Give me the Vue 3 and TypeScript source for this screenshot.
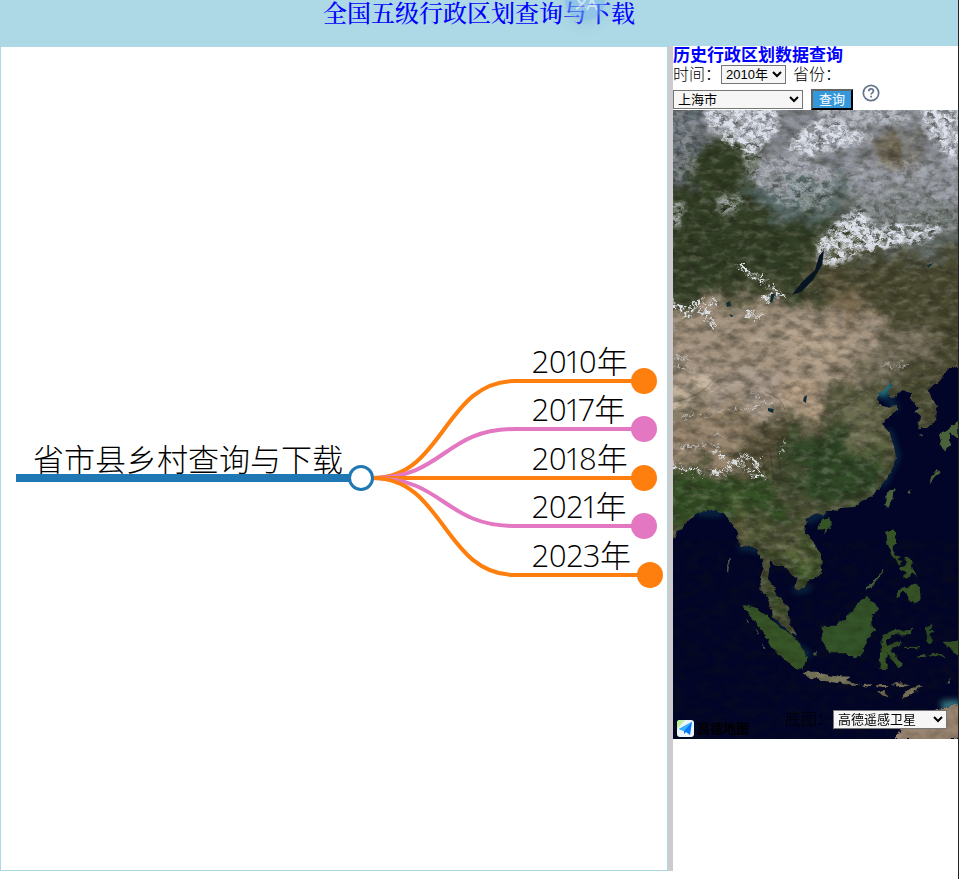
<script setup lang="ts">
import { ref } from 'vue'

interface Branch {
  year: string
  y: number
  end: number
  color: string
}

const branches: Branch[] = [
  { year: '2010年', y: 381, end: 644, color: '#ff7f0e' },
  { year: '2017年', y: 429, end: 644, color: '#e377c2' },
  { year: '2018年', y: 478, end: 644, color: '#ff7f0e' },
  { year: '2021年', y: 526, end: 644, color: '#e377c2' },
  { year: '2023年', y: 575, end: 650, color: '#ff7f0e' },
]

const linkPath = (b: Branch): string =>
  `M373 478C444 478 444 ${b.y} 515 ${b.y}H${b.end}`

const year = ref('2010年')
const province = ref('上海市')
const baseMap = ref('高德遥感卫星')
</script>

<template>
  <div class="page">
    <header class="top">
      <h1><a href="#">全国五级行政区划查询与下载</a></h1>
      <span class="bubble" aria-hidden="true">
        <svg viewBox="0 0 40 40" fill="none" stroke="#e4f1fa" stroke-width="2">
          <path d="M10 17h12M16 13v4M21 17c-1 5-6 10-10 12M12 18c2 5 5 7 9 9M22 30l5-11 5 11M24 26h6" />
        </svg>
      </span>
    </header>
    <main class="columns">
      <section class="tree">
        <svg viewBox="1 47 666 823">
          <g fill="none" stroke-width="4">
            <path v-for="b in branches" :key="b.year" :d="linkPath(b)" :stroke="b.color" />
          </g>
          <path d="M16 478H350" stroke="#1f77b4" stroke-width="8" />
          <circle cx="361" cy="478" r="11.5" fill="#fff" stroke="#1f77b4" stroke-width="3" />
          <text class="root-label" x="33" y="471">省市县乡村查询与下载</text>
          <g v-for="b in branches" :key="b.year">
            <circle :cx="b.end" :cy="b.y" r="13" :fill="b.color" />
            <text class="leaf-label" x="532" :y="b.y - 8">{{ b.year }}</text>
          </g>
        </svg>
      </section>
      <div class="divider"></div>
      <section class="side">
        <h2><a href="#">历史行政区划数据查询</a></h2>
        <form @submit.prevent>
          <div class="row first">
            <label for="year">时间：</label>
            <select id="year" v-model="year" class="year">
              <option>2010年</option>
              <option>2017年</option>
              <option>2018年</option>
              <option>2021年</option>
              <option>2023年</option>
            </select>
            <label for="province" class="next">省份：</label>
          </div>
          <div class="row second">
            <select id="province" v-model="province" class="province">
              <option>上海市</option>
              <option>北京市</option>
            </select>
            <button type="submit">查询</button>
            <a class="help" href="#" aria-label="帮助">
              <svg viewBox="0 0 18 18" fill="none" stroke="#64748b" stroke-width="1.7">
                <circle cx="9" cy="9" r="7.7" />
                <path d="M6.7 7.2C6.8 5.6 7.8 4.9 9 4.9c1.400 0 2.400.8 2.400 2.100 0 1.700-2.300 1.900-2.300 3.500M9.100 11.700v1.700" />
              </svg>
            </a>
          </div>
        </form>
        <div class="map">
          <svg viewBox="673 110 285 629" preserveAspectRatio="xMidYMid slice" color-interpolation-filters="sRGB">
            <defs>
              <filter id="soft" x="-30%" y="-30%" width="160%" height="160%">
                <feGaussianBlur stdDeviation="7" result="b" />
                <feTurbulence type="fractalNoise" baseFrequency=".035" numOctaves="6" seed="4" result="n" />
                <feDisplacementMap in="b" in2="n" scale="50" xChannelSelector="R" yChannelSelector="G" />
              </filter>
              <filter id="coast" x="-10%" y="-10%" width="120%" height="120%">
                <feTurbulence type="fractalNoise" baseFrequency=".14" numOctaves="3" seed="8" result="n" />
                <feDisplacementMap in="SourceGraphic" in2="n" scale="6" xChannelSelector="R" yChannelSelector="G" result="d" />
                <feGaussianBlur in="d" stdDeviation=".35" />
              </filter>
              <filter id="shallow" x="-10%" y="-10%" width="120%" height="120%">
                <feGaussianBlur stdDeviation="3" />
              </filter>
              <filter id="cloud" x="-20%" y="-20%" width="140%" height="140%">
                <feGaussianBlur in="SourceGraphic" stdDeviation="6" result="b" />
                <feTurbulence type="fractalNoise" baseFrequency=".045 .06" numOctaves="6" seed="12" result="n" />
                <feColorMatrix in="n" type="matrix" values="0 0 0 0 1  0 0 0 0 1  0 0 0 0 1  3 0 0 0 -.9" result="m" />
                <feComposite in="b" in2="m" operator="in" result="c" />
                <feDisplacementMap in="c" in2="n" scale="30" xChannelSelector="G" yChannelSelector="B" result="d" />
                <feGaussianBlur in="d" stdDeviation=".5" />
              </filter>
              <filter id="snow" x="-20%" y="-20%" width="140%" height="140%">
                <feTurbulence type="fractalNoise" baseFrequency=".2" numOctaves="4" seed="3" result="n" />
                <feColorMatrix in="n" type="matrix" values="0 0 0 0 1  0 0 0 0 1  0 0 0 0 1  5 0 0 0 -2.200" result="m" />
                <feComposite in="SourceGraphic" in2="m" operator="in" result="c" />
                <feDisplacementMap in="c" in2="n" scale="12" xChannelSelector="G" yChannelSelector="B" result="d" />
                <feGaussianBlur in="d" stdDeviation=".5" />
              </filter>
              <filter id="dark-grain" x="0" y="0" width="100%" height="100%">
                <feTurbulence type="fractalNoise" baseFrequency=".07 .12" numOctaves="6" seed="21" />
                <feColorMatrix type="matrix" values="0 0 0 0 .1  0 0 0 0 .1  0 0 0 0 .06  2.200 0 0 0 -.8" />
              </filter>
              <filter id="light-grain" x="0" y="0" width="100%" height="100%">
                <feTurbulence type="fractalNoise" baseFrequency=".09 .16" numOctaves="6" seed="35" />
                <feColorMatrix type="matrix" values="0 0 0 0 .85  0 0 0 0 .82  0 0 0 0 .78  0 3 0 0 -1.400" />
              </filter>
              <clipPath id="land">
                <path d="M660 100H970V366L957 367 950 368 946 371 942 378 935 384 928 390 932 398 937 407 936 420 927 428 918 428 920 417 914 412 919 408 913 403 911 392 902 390 896 396 890 398 888 391 893 385 889 382 885 389 878 393 877 399 880 406 888 407 897 406 897 411 890 415 884 421 882 425 888 431 892 440 895 450 896 461 890 473 882 485 870 497 853 507 840 508 833 511 826 511 823 518 819 512 812 516 807 520 803 527 807 534 815 544 821 556 822 570 815 578 807 583 802 588 795 590 797 578 788 571 784 566 777 566 770 560 769 570 768 580 774 588 777 596 788 606 790 623 797 635 791 633 783 625 775 618 771 609 768 598 760 590 763 573 762 560 757 549 752 547 740 546 738 541 737 533 733 524 723 512 712 510 697 513 683 527 673 537 660 545Z" />
              </clipPath>
            </defs>
            <rect x="673" y="110" width="285" height="629" fill="#020528" />
            <g filter="url(#shallow)" fill="none" stroke="#0d4258" stroke-linecap="round">
              <path d="M882 391L896 408M889 431L897 457L883 484" stroke-width="6" opacity=".6" />
              <path d="M881 391l8-5" stroke="#29727a" stroke-width="12" />
              <path d="M808 520l16-8M774 623l20 22 14 10M699 512l21 1M796 590l12-2M741 547l18 2" stroke-width="6" opacity=".7" />
              <path d="M945 705h13" stroke="#38838a" stroke-width="9" />
            </g>
            <g filter="url(#coast)">
              <g clip-path="url(#land)">
                <path d="M650 90H980V650H650Z" fill="#4d5036" />
                <g filter="url(#soft)">
                  <path d="M650 80H980V230H840L780 215 720 170 650 165Z" fill="#868a92" />
                  <path d="M650 80H700L705 180 660 185Z" fill="#566067" />
                  <path d="M675 190L703 140 744 140 756 172 810 205 837 220 820 260 800 300 765 278 670 300 650 230Z" fill="#323f25" />
                  <path d="M755 180H840L860 200 830 216H760Z" fill="#596c6b" />
                  <path d="M880 135l15 0 20 15 6 14-18 3-25-10Z" fill="#6a6149" />
                  <path d="M840 192L980 210V255H860L830 225Z" fill="#5f6763" />
                  <path d="M845 255L980 260V385H895L860 340 805 300Z" fill="#4a4a31" />
                  <path d="M820 290L860 285 870 315 830 320Z" fill="#74654b" />
                  <path d="M660 320L720 295 780 300 845 310 885 320 865 370 825 395 800 415 740 415 650 390Z" fill="#a4937f" />
                  <path d="M755 335l65-8 38 10-12 25-60 0Z" fill="#b6a38c" />
                  <path d="M650 380l60-10 80 5 35 18-20 30-50-25-100 10Z" fill="#aa9b8d" />
                  <path d="M650 385L712 378 708 392 650 412Z" fill="#d0bca4" />
                  <path d="M775 380l35 0 10 20-8 22-20-5Z" fill="#b9a187" />
                  <path d="M650 415L740 405 775 425 770 450 740 458 700 466 650 460Z" fill="#99866f" />
                  <path d="M745 420L795 425 785 460 765 480 740 460Z" fill="#554f36" />
                  <path d="M865 345l60-15 20 10-40 25-15 20-25-10Z" fill="#7d7562" />
                  <path d="M835 398L885 395 890 445 835 440Z" fill="#6c6d50" />
                  <path d="M790 438L838 430 855 445 885 450 880 500 840 508 795 490Z" fill="#304927" />
                  <path d="M840 445l30-12 22 18-20 15Z" fill="#5d6541" />
                  <path d="M660 473L745 472 775 484 800 520 720 520 650 530Z" fill="#345025" />
                  <path d="M725 500l30 20 10 35 40-20 20 25-10 30-40-25Z" fill="#3f592a" />
                  <path d="M738 503l6 0 5 35-8 4Z" fill="#95835b" />
                  <path d="M780 535l25 8-2 18-25-5Z" fill="#667044" />
                  <path d="M762 570l16 20 22 50-22-20Z" fill="#2c5423" />
                </g>
              </g>
              <g transform="translate(660 520) scale(.3333)" fill="#365326">
                <path d="M485 0l27-5 5 15-20 25-22-10Z" />
                <path d="M680 35l15-8 15 12-2 30-10 22 12 15 12 4-7 10-20-12-8-25-6-15Z" />
                <path d="M710 115l18 10-7 13-12-10ZM735 112l20 5 12 50-15-10-8 20-18-6 12-12-20-16 20-6ZM705 220l20-18 18 3 20-15 16 12 3 35-15 12-22-8 5-16-22-10-20 20Z" />
                <path d="M620 213l40-45 8-17" fill="none" stroke="#46603a" stroke-width="6" />
                <path d="M485 320l35 0 40-28 30-40 30-22 37 35-22 22 4 32 8 10-26 30-16 51-25 5-18-15h-57l-17-35Z" fill="#345429" />
                <path d="M247 255l38 7 45 33 30 25 50 35 15 25 17 20-12 50-25-5-35-30-40-40-20-40-30-35Z" fill="#375627" />
                <path d="M427 455l43 0 45 13 58 2-15 10 45 16-50-4-55-9-48-9Z" fill="#77765a" />
                <path d="M606 496l30-4-6 10ZM648 495l34 0-4 9-28-2ZM692 494l33-4 25 6-29 6ZM650 514l20 0 15 11-12 2ZM720 535l25-27 46-13-32 25Z" fill="#7b7458" />
                <path d="M668 345l30-12 50-3 10-8-5 20-58 3-18 15 8 12 40-7-8 12-25 13 26 34 13 5-2 12-16 4-33-48v50l-22 0 2-45Z" />
                <path d="M798 325l20-15-8 22 14 2-12 12 5 22-14 5Z" fill="#294a23" />
                <path d="M772 408l18-7 10 8-18 5ZM805 402l45 1 7 9-46-5ZM850 365l20 0 30-10v57l-25-25ZM735 380l48 1v4l-48-1Z" />
                <path d="M705 660l10-25 45-32 40-28 40-10 60-10v105Z" fill="#998571" />
                <path d="M255 300l10 6-4 3ZM282 325l15 13-4 6ZM304 365l13 18-4 4ZM455 401l16-5-2 12ZM205 115l5 0-5 40-5-3ZM858 489l15-17-8 20Z" fill="#4d5c43" />
              </g>
              <g transform="translate(660 310) scale(.3333)" fill="#4a623a">
                <path d="M688 538l14-3-5 35-12 27-12-15Z" />
                <path d="M835 375l25-12 35-30v53l-25-18 0 38-14 18-15-25Z" />
                <path d="M830 477l-25 40 6 1 25-35ZM740 550l15-12-5 17ZM778 373l13 0-5 7Z" />
              </g>
            </g>
            <rect x="673" y="540" width="285" height="199" filter="url(#dark-grain)" opacity=".25" />
            <g clip-path="url(#land)">
              <rect x="673" y="110" width="285" height="540" filter="url(#dark-grain)" opacity=".45" />
              <rect x="673" y="110" width="285" height="540" filter="url(#light-grain)" opacity=".2" />
              <g transform="translate(660 110) scale(.3333)" filter="url(#cloud)" fill="#dde1eb">
                <path d="M130-20H350L360 60 270 140 220 110 140 50Z" />
                <path d="M370 120L430 50 500 20 600 60 640 90 560 110 450 140Z" />
                <path d="M400-30h350v70l-200 10Z" opacity=".6" />
                <path d="M770-30H930V170L860 140 800 70Z" />
                <path d="M250 130l180 10 120 60-60 100-120-10-120-100Z" opacity=".45" />
                <path d="M550 150H900V360H650L560 250Z" opacity=".3" />
                <path d="M20-20H110V190L30 230Z" opacity=".3" />
                <path d="M475 390l70-75 60-25 45 65 60-20 150 20-60 40-160 25-130 50-40-20Z" />
                <path d="M170 255h80l-20 60-60-10ZM30 280l50 0-20 80-30-20Z" opacity=".6" />
              </g>
              <g filter="url(#snow)" fill="none" stroke="#dce0e4" stroke-linecap="round">
                <path d="M740 267l24 14 16 13-16 5M700 302l-14 12-13-10M690 310l24-9M748 314l12 3M700 307l14 18" stroke-width="7" />
                <path d="M822 243l26-7 30 3M850 225l30 10" stroke-width="8" />
                <path d="M668 462l13 7 20 3 26 1 8-14 10-4 12 8 5 13M735 459l19 15M714 453l8 5" stroke-width="6" />
                <path d="M784 437l-4 25M673 356l20 6M676 366l18 4M752 394l22 10M680 418l80-12M680 446l40 0M705 432l20 5M882 365l25 0" stroke-width="3" opacity=".6" />
              </g>
              <path d="M824 250l-2 15-9 15-12 12-9 3 10-13 13-12 4-14Z" fill="#071421" />
              <path d="M771 294l4 0-3 9-2-1ZM726 303l4-2 1 5-4 1ZM729 314l5 2-3 1ZM768 408l6 1-1 4-5-2ZM804 397l3-2-1 8-3-2ZM927 265l7-2-6 5Z" fill="#112c36" />
              <path d="M784 293q20 4 35-12M673 402q28-4 42-24M713 473q20 9 35-5M765 392q17 5 20 18M840 500q15-17 37-18M825 430q15-26 40-36" fill="none" stroke="#342f20" stroke-width="1" opacity=".3" />
              <path d="M752 465l4 26M760 450l8 30M770 450l4 33M777 448l4 26M783 435l-3 28" fill="none" stroke="#292e18" stroke-width="1.500" opacity=".3" />
            </g>
          </svg>
          <div class="brand">
            <svg viewBox="0 0 17 17">
              <rect width="17" height="17" rx="3" fill="#eaf4fa" />
              <path d="M0 3a3 3 0 0 1 3-3h5L0 9Z" fill="#b9ef9b" />
              <path d="M2 9L15 2 13 15 9 12 7 14V11Z" fill="#0878f9" />
              <path d="M2 9L15 2 7 11Z" fill="#35b2ff" />
            </svg>
            <span>高德地图</span>
          </div>
          <div class="base">
            <label for="base">底图：</label>
            <select id="base" v-model="baseMap">
              <option>高德遥感卫星</option>
              <option>天地图影像</option>
            </select>
          </div>
        </div>
      </section>
    </main>
  </div>
</template>

<style>
body {
  margin: 0;
  background: #fff;
}
</style>

<style scoped>
.page {
  box-sizing: border-box;
  min-height: 100vh;
  border-right: 1px solid #222;
  font-family: "Liberation Sans", "Noto Sans CJK SC", sans-serif;
  font-size: 16px;
  color: #000;
}
.top {
  position: relative;
  height: 46px;
  background: #add8e6;
}
h1 {
  margin: 0;
  text-align: center;
  font: 500 24px/28px "Liberation Serif", "Noto Serif CJK SC", "Noto Sans CJK SC", serif;
}
h1 a,
h2 a {
  color: #00f;
  text-decoration: none;
}
.bubble {
  position: absolute;
  top: -20px;
  left: 59%;
  width: 40px;
  height: 40px;
  border-radius: 50%;
  background: #79b6eb;
  opacity: .55;
  box-shadow: 0 4px 12px #8bbbd0;
}
.bubble svg {
  display: block;
}
.columns {
  display: grid;
  grid-template-columns: minmax(0, 1fr) 5px 285px;
  align-items: start;
}
.tree {
  box-sizing: border-box;
  height: calc(100vh - 54px);
  border: 1px solid #add8e6;
}
.tree svg {
  display: block;
  width: 100%;
  height: 100%;
}
.root-label,
.leaf-label {
  font-family: "Noto Sans CJK SC", sans-serif;
  font-weight: 300;
  font-size: 31px;
}
.leaf-label {
  font-family: "Open Sans", "Noto Sans CJK SC", sans-serif;
  font-variant-numeric: proportional-nums;
}
.divider {
  height: calc(100vh - 54px);
  background: #ccc;
}
h2 {
  margin: 0;
  font: 700 17px/19px "Liberation Sans", "Noto Sans CJK SC", sans-serif;
}
.row {
  display: flex;
  align-items: center;
}
.first {
  height: 19px;
}
.second {
  height: 26px;
  align-items: flex-end;
}
label {
  font-weight: 300;
  line-height: 19px;
  white-space: nowrap;
}
.next {
  margin-left: 7px;
}
select {
  box-sizing: border-box;
  height: 19px;
  margin: 0;
  padding: 0;
  border: 1px solid #767676;
  border-radius: 0;
  background-color: #f6f6f6;
  color: #000;
  font: 13px "Liberation Sans", "Noto Sans CJK SC", sans-serif;
}
.year {
  width: 65px;
}
.province {
  width: 130px;
  margin-bottom: 1px;
}
button {
  box-sizing: border-box;
  width: 42px;
  height: 21px;
  margin: 0 9px 0 8px;
  padding: 0;
  border: 2px outset #111;
  background: #3498db;
  color: #fff;
  font: 13px/17px "Liberation Sans", "Noto Sans CJK SC", sans-serif;
}
.help {
  align-self: flex-start;
  width: 18px;
  height: 18px;
}
.help svg {
  display: block;
}
.map {
  position: relative;
  height: calc(100vh - 250px);
  overflow: hidden;
}
.map > svg {
  display: block;
  width: 100%;
  height: 100%;
}
.brand,
.base {
  position: absolute;
  display: flex;
  align-items: center;
}
.brand {
  left: 4px;
  bottom: 2px;
  gap: 3px;
  font-weight: 700;
  font-size: 13px;
  line-height: 17px;
}
.brand svg {
  width: 17px;
  height: 17px;
}
.base {
  right: 11px;
  bottom: 10px;
}
.base select {
  width: 114px;
}
</style>
